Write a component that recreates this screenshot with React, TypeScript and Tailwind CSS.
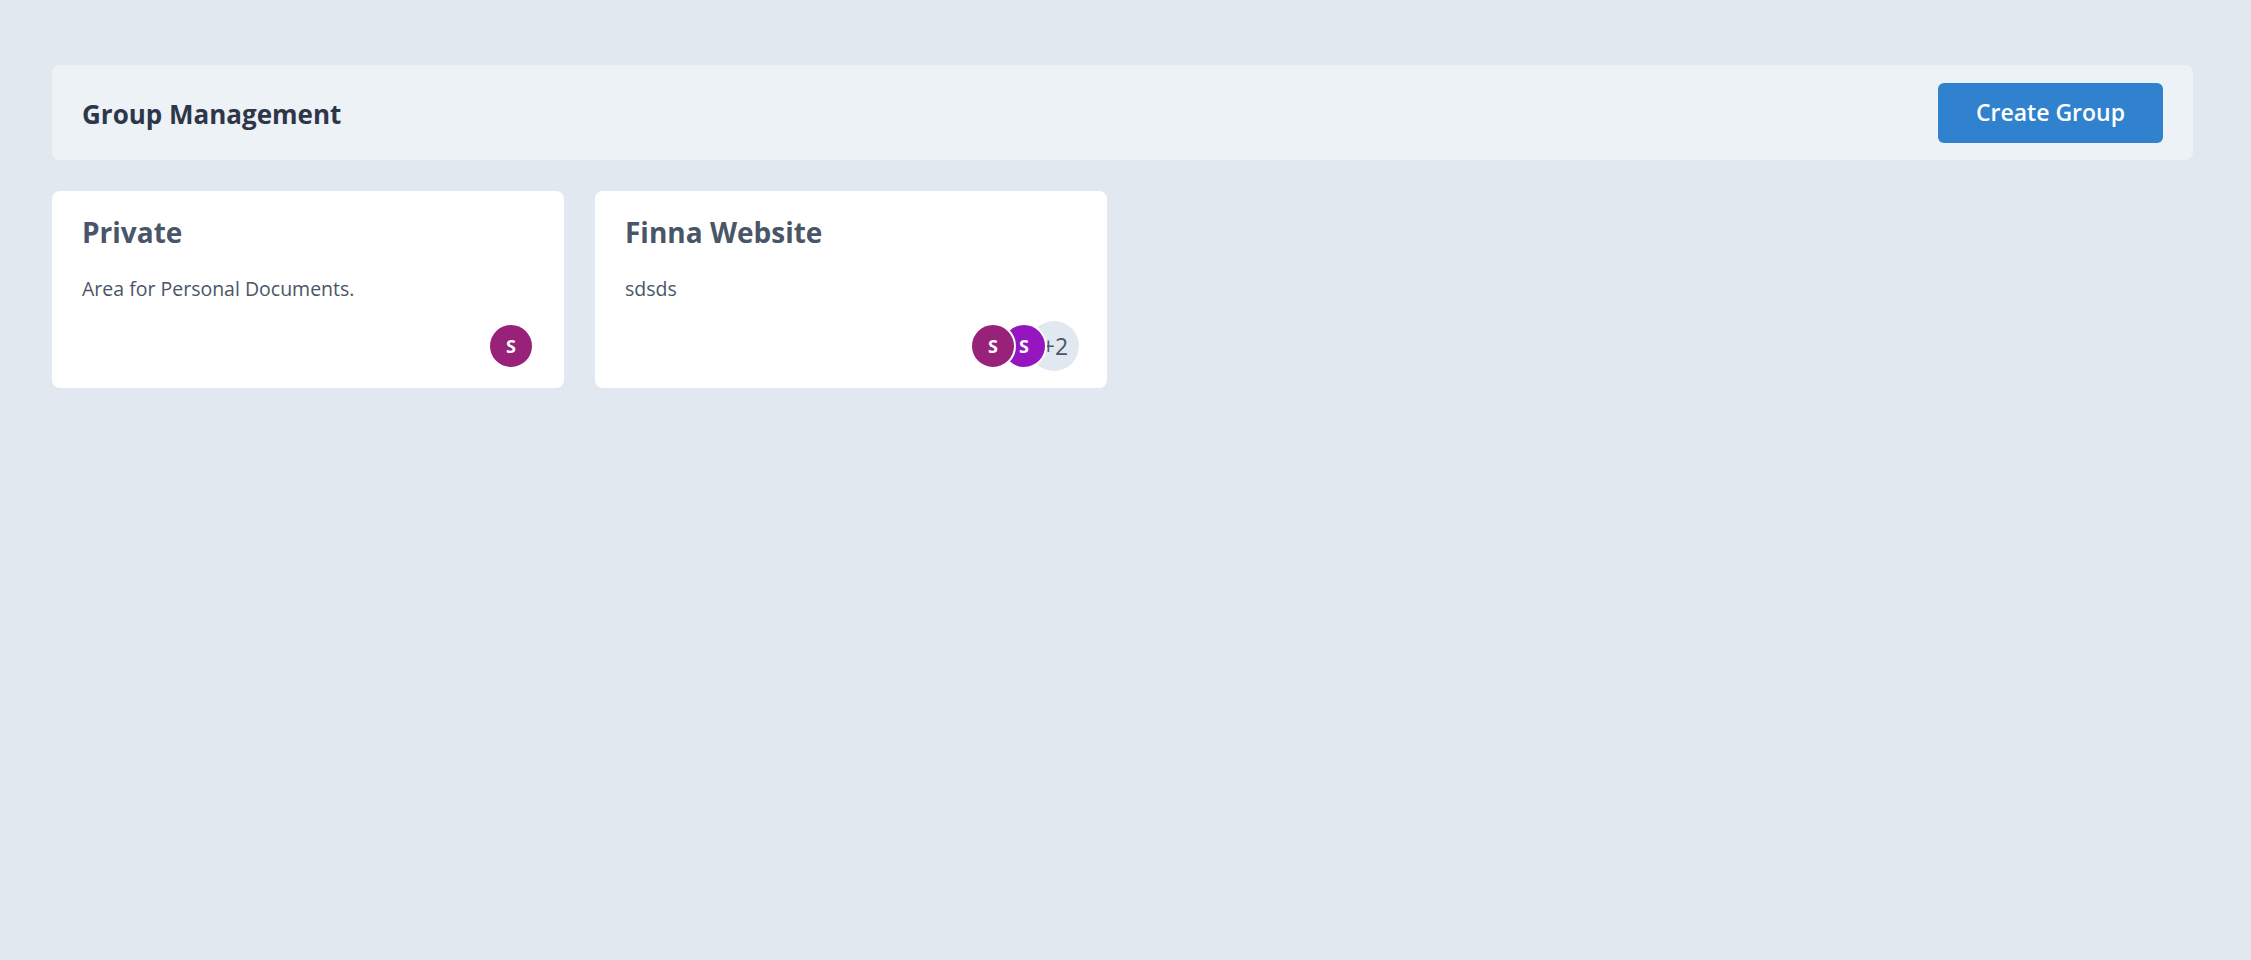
import React from "react";

type Member = { initial: string; color: string };

const groups: { title: string; desc: string; members: Member[]; extra?: number }[] = [
  {
    title: "Private",
    desc: "Area for Personal Documents.",
    members: [{ initial: "S", color: "bg-[#98217a]" }],
  },
  {
    title: "Finna Website",
    desc: "sdsds",
    members: [
      { initial: "S", color: "bg-[#98217a]" },
      { initial: "S", color: "bg-[#9515c0]" },
    ],
    extra: 2,
  },
];

const zs = ["z-30", "z-20", "z-10"];

function Avatars({ members, extra }: { members: Member[]; extra?: number }) {
  return (
    <div className="flex h-[50px] items-center justify-end">
      {members.map((m, i) => (
        <div
          key={i}
          className={`relative ${zs[i]} ${i > 0 ? "-ml-[15px]" : ""} flex h-[46px] w-[46px] items-center justify-center rounded-full border-2 border-white ${m.color} text-[18px] font-bold text-white`}
        >
          {m.initial}
        </div>
      ))}
      {extra ? (
        <div className="relative z-0 -ml-[18px] -mr-[2px] flex h-[50px] w-[50px] items-center justify-center rounded-full bg-[#e2e8f0] pl-[2px] text-[23px] text-[#4a5568]">
          +{extra}
        </div>
      ) : null}
    </div>
  );
}

export default function App() {
  return (
    <div
      className="min-h-screen bg-[#e2e8f0] pl-[52px] pr-[58px] pt-[65px]"
      style={{ fontFamily: '"Open Sans", "Noto Sans", sans-serif' }}
    >
      <div className="flex h-[95px] items-center justify-between rounded-lg bg-[#edf2f7] px-[30px]">
        <h1 className="mt-[3px] text-[26px] font-bold text-[#2d3748]">Group Management</h1>
        <button className="flex h-[60px] w-[225px] items-center justify-center rounded-md bg-[#3182ce] text-[23px] font-semibold text-white">
          Create Group
        </button>
      </div>
      <div className="mt-[31px] grid grid-cols-4 gap-[31px]">
        {groups.map((g) => (
          <div
            key={g.title}
            className="flex h-[197px] flex-col rounded-lg bg-white px-[30px] pb-[17px] pt-[21px]"
          >
            <h2 className="text-[28px] font-bold leading-[40px] text-[#4a5568]">{g.title}</h2>
            <p className="mt-[21px] text-[19.5px] leading-[31px] text-[#4a5568]">{g.desc}</p>
            <div className="mt-auto">
              <Avatars members={g.members} extra={g.extra} />
            </div>
          </div>
        ))}
      </div>
    </div>
  );
}
